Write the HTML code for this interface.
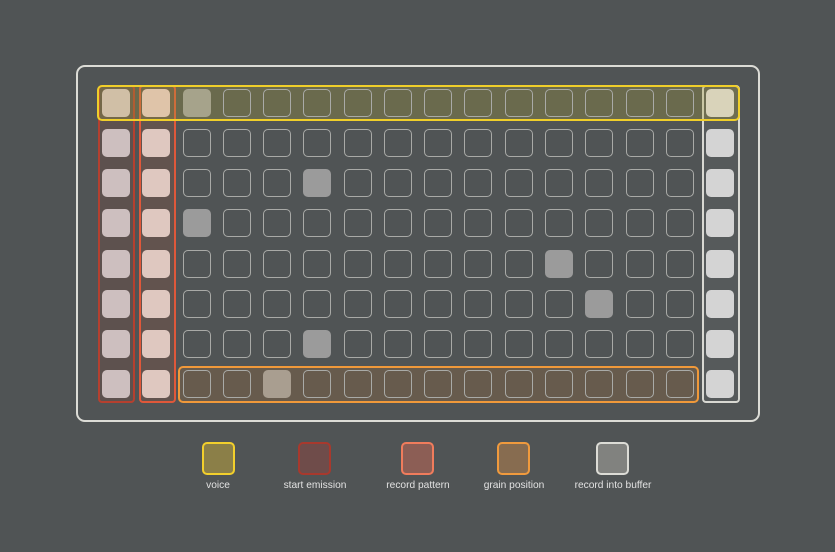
<!DOCTYPE html>
<html><head><style>
body{margin:0;width:835px;height:552px;background:#505455;position:relative;overflow:hidden;font-family:"Liberation Sans",sans-serif}
div{position:absolute;box-sizing:border-box}
.frame{left:76px;top:65px;width:684px;height:357px;border:2px solid #dcdcd6;border-radius:9px}
.c{width:28px;height:28px;border:1px solid #a9aaa7;border-radius:5px}
.f{border:none}
.lg{width:33px;height:33px;border-radius:5px;border:2px solid}
.lt{color:#e2e2e2;font-size:10.2px;width:140px;text-align:center;top:480px}
</style></head><body>
<div class="frame"></div>
<div style="left:98px;top:85px;width:37px;height:318px;background:rgba(130,70,60,.25);border:2px solid #b5402f;border-radius:4px"></div>
<div style="left:139px;top:85px;width:37px;height:318px;background:rgba(150,80,60,.25);border:2px solid #e0583a;border-radius:4px"></div>
<div style="left:178px;top:366px;width:521px;height:37px;background:rgba(160,110,60,.3);border:2px solid #f0993a;border-radius:5px"></div>
<div style="left:702px;top:85px;width:38px;height:318px;background:rgba(255,255,255,.04);border:2px solid #d8d8d2;border-radius:4px"></div>
<div style="left:97px;top:85px;width:643px;height:36px;background:rgba(170,160,60,.3);border:2px solid #f0cf2a;border-radius:5px"></div>
<div id="g"></div>
<script>
var h='';
var fill={'2,5':'#9b9b9b','3,2':'#9b9b9b','4,11':'#9b9b9b','5,12':'#9b9b9b','6,5':'#9b9b9b','7,4':'#a99e90','0,2':'#a6a38b','0,15':'#d9d3ba','0,0':'#d0bfa6','0,1':'#dfc4a9'};
for(var r=0;r<8;r++)for(var c=0;c<16;c++){
var x=102+c*40.27,y=89+r*40.15,k=r+','+c,col=fill[k];
if(!col){if(c==0)col='#cdbfbf';else if(c==1)col='#dfc8c0';else if(c==15)col='#d4d4d4';}
h+='<div class="c'+(col?' f':'')+'" style="left:'+x.toFixed(1)+'px;top:'+y.toFixed(1)+'px'+(col?';background:'+col:'')+'"></div>';}
document.getElementById('g').outerHTML=h;
</script>
<div class="lg" style="left:202px;top:442px;background:#8b7f48;border-color:#f2cf2c"></div>
<div class="lg" style="left:298px;top:442px;background:#6f4c4a;border-color:#a8392d"></div>
<div class="lg" style="left:401px;top:442px;background:#8c5e55;border-color:#f07c5c"></div>
<div class="lg" style="left:497px;top:442px;background:#876c50;border-color:#f09a3d"></div>
<div class="lg" style="left:596px;top:442px;background:#81827f;border-color:#dcdcd6"></div>
<div class="lt" style="left:148px">voice</div>
<div class="lt" style="left:245px">start emission</div>
<div class="lt" style="left:348px">record pattern</div>
<div class="lt" style="left:444px">grain position</div>
<div class="lt" style="left:543px">record into buffer</div>
</body></html>
